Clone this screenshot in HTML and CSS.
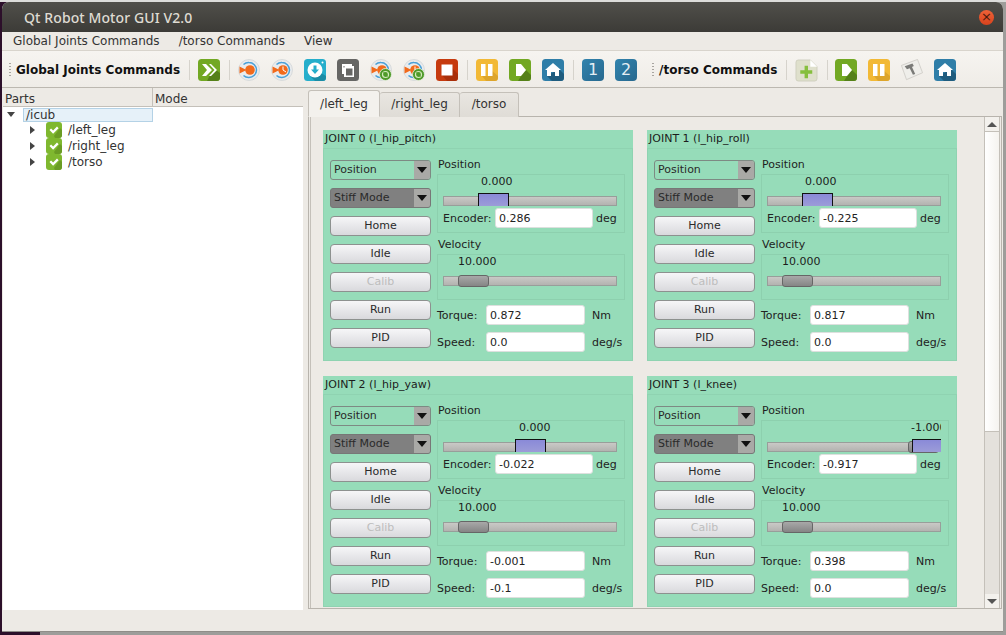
FILE: index.html
```html
<!DOCTYPE html>
<html lang="en">
<head>
  <meta charset="UTF-8" />
  <title>Qt Robot Motor GUI V2.0</title>
  <link rel="stylesheet" href="styles.css">
</head>
<body>
  <svg class="defs" xmlns="http://www.w3.org/2000/svg">
    <symbol id="i-ff" viewBox="0 0 22 22">
      <rect width="22" height="22" rx="3.5" fill="#72a823"/>
      <path d="M12 16l6-5 4 3v4.500a3.500 3.500 0 0 1-3.500 3.500H9z" fill="#558019"/>
      <path d="M4 5h4l6 6-6 6H4l5-6zM11 5h2l6 6-6 6h-2l5.500-6z" fill="#fff"/>
    </symbol>
    <symbol id="i-play" viewBox="0 0 22 22">
      <rect width="22" height="22" rx="3.500" fill="#72a823"/>
      <path d="M12 17l5-6 5 5v2.500a3.500 3.500 0 0 1-3.500 3.500H9z" fill="#558019"/>
      <path d="M7 5h5l5 6-5 6H7z" fill="#fff"/>
    </symbol>
    <symbol id="i-pause" viewBox="0 0 22 22">
      <rect width="22" height="22" rx="3.500" fill="#f2b936"/>
      <path d="M15 17v-6l7 6v1.500a3.500 3.500 0 0 1-3.500 3.500H10l-4-5z" fill="#dda52c"/>
      <path d="M5 5h4.500v12H5zM12 5h4.500v12H12z" fill="#fff"/>
    </symbol>
    <symbol id="i-home" viewBox="0 0 22 22">
      <rect width="22" height="22" rx="3.500" fill="#2f7ea8"/>
      <path d="M17 10l5 5v3.500a3.500 3.500 0 0 1-3.500 3.500H10l-5-5z" fill="#1f5c7e"/>
      <path d="M11 4l8 7h-2v6h-4v-4H9v4H5v-6H3z" fill="#fff"/>
    </symbol>
    <symbol id="i-stop" viewBox="0 0 22 22">
      <rect width="22" height="22" rx="3.500" fill="#c63a0e"/>
      <path d="M16 16V9l6 6v3.500a3.500 3.500 0 0 1-3.500 3.500H11l-5-6z" fill="#a92f0a"/>
      <rect x="5.500" y="5.500" width="11" height="11" fill="#fff"/>
    </symbol>
    <symbol id="i-down" viewBox="0 0 22 22">
      <rect width="22" height="22" rx="3.500" fill="#26aecb"/>
      <path d="M17 14l5 3v1.500a3.500 3.500 0 0 1-3.500 3.500H11l-4-4z" fill="#1b8ca5"/>
      <circle cx="11" cy="11" r="7.500" fill="#fff"/>
      <circle cx="18.500" cy="3.500" r="1" fill="#fff"/>
      <path d="M9.500 6.500h3v4H15l-4 4.500-4-4.500h2.500z" fill="#26aecb"/>
    </symbol>
    <symbol id="i-copy" viewBox="0 0 22 22">
      <rect width="22" height="22" rx="3.500" fill="#666664"/>
      <path d="M5 5h10v2h2v11H7v-3H5z" fill="#fff"/>
      <path d="M6.500 8.500h1V7h-1zM9 9.500h6.500v7H9z" fill="#666664"/>
    </symbol>
    <symbol id="i-target" viewBox="0 0 22 22">
      <circle cx="11" cy="11" r="10.500" fill="#e9ebed" stroke="#d2d5d7" stroke-width=".8"/>
      <path d="M11 3.500a7.500 7.500 0 0 1 0 15M5.500 5.500A7.500 7.500 0 0 1 11 3.500M5.500 16.500A7.500 7.500 0 0 0 11 18.500" fill="none" stroke="#4aa0d8" stroke-width="1.500"/>
      <circle cx="12" cy="11" r="4.800" fill="#f26a1b"/>
      <path d="M1.500 7.500l7 3.500-7 3.500z" fill="#f26a1b"/>
    </symbol>
    <symbol id="i-clock" viewBox="0 0 22 22">
      <circle cx="11" cy="11" r="10.500" fill="#e9ebed" stroke="#d2d5d7" stroke-width=".8"/>
      <path d="M11 3.500a7.500 7.500 0 0 1 0 15M5.500 5.500A7.500 7.500 0 0 1 11 3.500M5.500 16.500A7.500 7.500 0 0 0 11 18.500" fill="none" stroke="#4aa0d8" stroke-width="1.500"/>
      <circle cx="12" cy="11" r="4.800" fill="#f26a1b"/>
      <path d="M1.500 7.500l7 3.500-7 3.500z" fill="#f26a1b"/>
      <path d="M12 7.500V11l3 2" fill="none" stroke="#fff" stroke-width="1"/>
    </symbol>
    <symbol id="i-badge" viewBox="0 0 22 22">
      <circle cx="15.500" cy="15.500" r="6" fill="#4f9a2a" stroke="#eef1e6" stroke-width=".8"/>
      <circle cx="15.500" cy="15.500" r="3" fill="none" stroke="#d5eabc" stroke-width="1.200"/>
      <path d="M13.500 13.500l4 4" stroke="#4f9a2a" stroke-width="1.200"/>
    </symbol>
    <symbol id="i-plus" viewBox="0 0 24 24">
      <path d="M3.500 1H16l7 7v12.500a2.500 2.500 0 0 1-2.500 2.500h-17A2.500 2.500 0 0 1 1 20.500v-17A2.500 2.500 0 0 1 3.500 1z" fill="#dfe0cc" stroke="#c9c9b8" stroke-width=".8"/>
      <path d="M16 1l7 7h-7z" fill="#fff"/>
      <path d="M10 7h3.600v4.800H18v3.600h-4.400V20H10v-4.600H5.500v-3.600H10z" fill="#86bf3e"/>
    </symbol>
    <symbol id="i-hammer" viewBox="0 0 24 24">
      <path d="M0.500 7L18 0.500 23.500 15 6 22.500z" fill="#efeeea" stroke="#c8c6c0" stroke-width=".8"/>
      <path d="M4 8l8.500-3.200 1.500 2.700-2 1.300 3.500 7.500-2.500 1-3.500-7.300-3 1.200z" fill="#7b7b78"/>
    </symbol>
    <symbol id="i-check" viewBox="0 0 16 16">
      <rect width="16" height="16" rx="3" fill="#7fb82f"/>
      <path d="M8 14l6-8 2 2v5a3 3 0 0 1-3 3H9z" fill="#6a9c24"/>
      <path d="M3.500 8l1.600-1.600 2 2L11 4.600l1.600 1.600-5.500 5.600z" fill="#fff"/>
    </symbol>
  </svg>

  <div class="window">
    <div class="titlebar">
      <span class="title">Qt Robot Motor GUI V2.0</span>
      <span class="close">×</span>
    </div>

    <div class="menubar">
      <span>Global Joints Commands</span>
      <span>/torso Commands</span>
      <span>View</span>
    </div>

    <div class="toolbar">
      <span class="grip"></span>
      <span class="tool-label">Global Joints Commands</span>
      <span class="sep"></span>
      <svg class="tool"><use href="#i-ff"/></svg>
      <span class="sep"></span>
      <div class="tools">
        <svg class="tool"><use href="#i-target"/></svg>
        <svg class="tool"><use href="#i-clock"/></svg>
        <svg class="tool"><use href="#i-down"/></svg>
        <svg class="tool"><use href="#i-copy"/></svg>
        <svg class="tool"><use href="#i-target"/><use href="#i-badge"/></svg>
        <svg class="tool"><use href="#i-clock"/><use href="#i-badge"/></svg>
        <svg class="tool"><use href="#i-stop"/></svg>
      </div>
      <span class="sep"></span>
      <div class="tools">
        <svg class="tool"><use href="#i-pause"/></svg>
        <svg class="tool"><use href="#i-play"/></svg>
        <svg class="tool"><use href="#i-home"/></svg>
      </div>
      <span class="sep"></span>
      <div class="tools">
        <span class="tool tool-num">1</span>
        <span class="tool tool-num">2</span>
      </div>
      <span class="grip grip-torso"></span>
      <span class="tool-label">/torso Commands</span>
      <span class="sep"></span>
      <svg class="tool tool-big"><use href="#i-plus"/></svg>
      <span class="sep sep-tight"></span>
      <div class="tools">
        <svg class="tool"><use href="#i-play"/></svg>
        <svg class="tool"><use href="#i-pause"/></svg>
        <svg class="tool"><use href="#i-hammer"/></svg>
        <svg class="tool"><use href="#i-home"/></svg>
      </div>
    </div>

    <div class="main">
      <div class="tree">
        <div class="tree-head">
          <span class="head-cell">Parts</span>
          <span class="head-cell">Mode</span>
        </div>
        <div class="tree-row tree-root">
          <span class="arrow-down"></span>
          <span class="tree-selected">/icub</span>
        </div>
        <div class="tree-row">
          <span class="arrow-right"></span>
          <svg class="check"><use href="#i-check"/></svg>
          <span>/left_leg</span>
        </div>
        <div class="tree-row">
          <span class="arrow-right"></span>
          <svg class="check"><use href="#i-check"/></svg>
          <span>/right_leg</span>
        </div>
        <div class="tree-row">
          <span class="arrow-right"></span>
          <svg class="check"><use href="#i-check"/></svg>
          <span>/torso</span>
        </div>
      </div>

      <div class="splitter"></div>

      <div class="tabs">
        <div class="tab-bar">
          <span class="tab tab-active">/left_leg</span>
          <span class="tab tab-right">/right_leg</span>
          <span class="tab tab-torso">/torso</span>
        </div>
        <div class="pane">
          <div class="scroll-area">
            <div class="joints">

              <div class="joint">
                <div class="joint-title">JOINT 0 (l_hip_pitch)</div>
                <div class="joint-body">
                  <div class="joint-left">
                    <div class="combo">Position<span class="combo-arrow"></span></div>
                    <div class="combo combo-dark">Stiff Mode<span class="combo-arrow"></span></div>
                    <div class="btn">Home</div>
                    <div class="btn">Idle</div>
                    <div class="btn btn-off">Calib</div>
                    <div class="btn">Run</div>
                    <div class="btn">PID</div>
                  </div>
                  <div class="joint-right">
                    <div class="group-label">Position</div>
                    <div class="group group-pos">
                      <div class="value"><span style="margin-left:38px">0.000</span></div>
                      <div class="slider"><span class="handle-pos" style="left:34px"></span></div>
                      <div class="enc-row"><span class="enc-label">Encoder:</span><span class="field field-enc">0.286</span><span>deg</span></div>
                    </div>
                    <div class="group-label group-label-vel">Velocity</div>
                    <div class="group group-vel">
                      <div class="value"><span style="margin-left:15px">10.000</span></div>
                      <div class="slider"><span class="handle-vel"></span></div>
                    </div>
                    <div class="read-row read-torque"><span class="read-label">Torque:</span><span class="field">0.872</span><span class="read-unit">Nm</span></div>
                    <div class="read-row read-speed"><span class="read-label">Speed:</span><span class="field">0.0</span><span class="read-unit">deg/s</span></div>
                  </div>
                </div>
              </div>

              <div class="joint">
                <div class="joint-title">JOINT 1 (l_hip_roll)</div>
                <div class="joint-body">
                  <div class="joint-left">
                    <div class="combo">Position<span class="combo-arrow"></span></div>
                    <div class="combo combo-dark">Stiff Mode<span class="combo-arrow"></span></div>
                    <div class="btn">Home</div>
                    <div class="btn">Idle</div>
                    <div class="btn btn-off">Calib</div>
                    <div class="btn">Run</div>
                    <div class="btn">PID</div>
                  </div>
                  <div class="joint-right">
                    <div class="group-label">Position</div>
                    <div class="group group-pos">
                      <div class="value"><span style="margin-left:38px">0.000</span></div>
                      <div class="slider"><span class="handle-pos" style="left:34px"></span></div>
                      <div class="enc-row"><span class="enc-label">Encoder:</span><span class="field field-enc">-0.225</span><span>deg</span></div>
                    </div>
                    <div class="group-label group-label-vel">Velocity</div>
                    <div class="group group-vel">
                      <div class="value"><span style="margin-left:15px">10.000</span></div>
                      <div class="slider"><span class="handle-vel"></span></div>
                    </div>
                    <div class="read-row read-torque"><span class="read-label">Torque:</span><span class="field">0.817</span><span class="read-unit">Nm</span></div>
                    <div class="read-row read-speed"><span class="read-label">Speed:</span><span class="field">0.0</span><span class="read-unit">deg/s</span></div>
                  </div>
                </div>
              </div>

              <div class="joint">
                <div class="joint-title">JOINT 2 (l_hip_yaw)</div>
                <div class="joint-body">
                  <div class="joint-left">
                    <div class="combo">Position<span class="combo-arrow"></span></div>
                    <div class="combo combo-dark">Stiff Mode<span class="combo-arrow"></span></div>
                    <div class="btn">Home</div>
                    <div class="btn">Idle</div>
                    <div class="btn btn-off">Calib</div>
                    <div class="btn">Run</div>
                    <div class="btn">PID</div>
                  </div>
                  <div class="joint-right">
                    <div class="group-label">Position</div>
                    <div class="group group-pos">
                      <div class="value"><span style="margin-left:76px">0.000</span></div>
                      <div class="slider"><span class="handle-pos" style="left:71px"></span></div>
                      <div class="enc-row"><span class="enc-label">Encoder:</span><span class="field field-enc">-0.022</span><span>deg</span></div>
                    </div>
                    <div class="group-label group-label-vel">Velocity</div>
                    <div class="group group-vel">
                      <div class="value"><span style="margin-left:15px">10.000</span></div>
                      <div class="slider"><span class="handle-vel"></span></div>
                    </div>
                    <div class="read-row read-torque"><span class="read-label">Torque:</span><span class="field">-0.001</span><span class="read-unit">Nm</span></div>
                    <div class="read-row read-speed"><span class="read-label">Speed:</span><span class="field">-0.1</span><span class="read-unit">deg/s</span></div>
                  </div>
                </div>
              </div>

              <div class="joint">
                <div class="joint-title">JOINT 3 (l_knee)</div>
                <div class="joint-body">
                  <div class="joint-left">
                    <div class="combo">Position<span class="combo-arrow"></span></div>
                    <div class="combo combo-dark">Stiff Mode<span class="combo-arrow"></span></div>
                    <div class="btn">Home</div>
                    <div class="btn">Idle</div>
                    <div class="btn btn-off">Calib</div>
                    <div class="btn">Run</div>
                    <div class="btn">PID</div>
                  </div>
                  <div class="joint-right">
                    <div class="group-label">Position</div>
                    <div class="group group-pos">
                      <div class="value"><span style="margin-left:144px">-1.000</span></div>
                      <div class="slider">
                        <span class="handle-vel" style="left:140px"></span>
                        <span class="handle-pos handle-end" style="left:144px"></span>
                      </div>
                      <div class="enc-row"><span class="enc-label">Encoder:</span><span class="field field-enc">-0.917</span><span>deg</span></div>
                    </div>
                    <div class="group-label group-label-vel">Velocity</div>
                    <div class="group group-vel">
                      <div class="value"><span style="margin-left:15px">10.000</span></div>
                      <div class="slider"><span class="handle-vel"></span></div>
                    </div>
                    <div class="read-row read-torque"><span class="read-label">Torque:</span><span class="field">0.398</span><span class="read-unit">Nm</span></div>
                    <div class="read-row read-speed"><span class="read-label">Speed:</span><span class="field">0.0</span><span class="read-unit">deg/s</span></div>
                  </div>
                </div>
              </div>

            </div>
            <div class="scrollbar">
              <span class="scroll-btn"><span class="tri-up"></span></span>
              <span class="scroll-thumb"></span>
              <span class="scroll-groove"></span>
              <span class="scroll-btn"><span class="tri-down"></span></span>
            </div>
          </div>
        </div>
      </div>
    </div>

    <div class="statusbar"></div>
  </div>
</body>
</html>
```
FILE: styles.css
```css
* {
  box-sizing: border-box;
}
html, body {
  height: 100%;
}
body {
  margin: 0;
  padding: 2px 3px 3px 2px;
  overflow: hidden;
  font-family: 'DejaVu Sans', sans-serif;
  font-size: 11px;
  color: #222;
  background:
    linear-gradient(#dcdcda 0 2px, transparent 2px),
    linear-gradient(90deg, #2c0f2a 0 40px, #9d9d9a 40px);
}
.defs {
  display: none;
}
.window {
  height: 630px;
  display: flex;
  flex-direction: column;
  overflow: hidden;
  border-radius: 7px 7px 0 0;
  background-color: #edeae5;
  border-bottom: 1px solid #8f8d88;
}

/* title bar */
.titlebar {
  flex: none;
  height: 30px;
  display: flex;
  align-items: center;
  padding: 0 9px 0 22px;
  justify-content: space-between;
  background: linear-gradient(#504f4a, #3c3b37);
}
.title {
  font-family: 'Noto Sans', sans-serif;
  font-size: 14px;
  font-weight: 500;
  letter-spacing: 0.1px;
  color: #dfdbd2;
}
.close {
  width: 15px;
  height: 15px;
  border-radius: 50%;
  background: linear-gradient(#ee6238, #d9431d);
  color: #4a1a0c;
  font-size: 13px;
  line-height: 14px;
  text-align: center;
}

/* menu */
.menubar {
  flex: none;
  height: 18px;
  display: flex;
  align-items: center;
  gap: 19px;
  padding-left: 11px;
  font-size: 12px;
  color: #333;
}

/* toolbar */
.toolbar {
  flex: none;
  height: 38px;
  display: flex;
  align-items: center;
  padding: 2px 0 0 7px;
  background: linear-gradient(#f6f4f0, #efece7);
  border-top: 1px solid #d8d4cc;
  border-bottom: 1px solid #bcb8b0;
}
.grip {
  width: 2px;
  height: 16px;
  background-image: radial-gradient(#a8a5a0 45%, transparent 50%);
  background-size: 2px 3px;
}
.grip-torso {
  margin-left: 15px;
}
.tool-label {
  margin-left: 5px;
  font-weight: bold;
  font-size: 12px;
  color: #111;
  white-space: nowrap;
}
.sep {
  width: 1px;
  height: 20px;
  margin: 0 8px 0 9px;
  background-color: #d6d3cc;
}
.sep-tight {
  margin-right: 7px;
}
.tools {
  display: flex;
  gap: 11px;
}
.tool {
  display: block;
  flex: none;
  width: 22px;
  height: 22px;
}
.tool-big {
  width: 23px;
  height: 23px;
}
.tool-num {
  border-radius: 4px;
  background: linear-gradient(135deg, #3284ae, #27688e);
  color: #e4eef4;
  font-size: 16px;
  line-height: 22px;
  text-align: center;
}

/* main area */
.main {
  flex: 1;
  min-height: 0;
  display: flex;
}
.tree {
  flex: none;
  width: 300px;
  margin-left: 1px;
  background-color: #fff;
  color: #333;
}
.tree-head {
  display: flex;
  height: 19px;
  background-color: #edeae5;
  border-bottom: 1px solid #c4c0b9;
  font-size: 12px;
}
.head-cell {
  width: 150px;
  padding: 4px 0 0 2px;
  border-right: 1px solid #c4c0b9;
  color: #333;
}
.head-cell:last-child {
  border-right: none;
}
.tree-row {
  height: 16px;
  display: flex;
  align-items: center;
  padding-left: 27px;
  font-size: 12px;
}
.tree-root {
  height: 15px;
  padding-left: 4px;
}
.tree-selected {
  width: 130px;
  height: 14px;
  line-height: 12px;
  margin-left: 8px;
  padding-left: 2px;
  background-color: #e6f1f9;
  border: 1px solid #b4d2e6;
}
.arrow-down {
  width: 0;
  height: 0;
  border-style: solid;
  border-width: 5px 4.500px 0;
  border-color: #444 transparent transparent;
}
.arrow-right {
  width: 0;
  height: 0;
  border-style: solid;
  border-width: 4.500px 0 4.500px 5px;
  border-color: transparent transparent transparent #444;
}
.check {
  width: 16px;
  height: 16px;
  margin: 0 6px 0 11px;
}
.splitter {
  flex: none;
  width: 5px;
  background-color: #edeae5;
}

/* tabs */
.tabs {
  flex: 1;
  min-width: 0;
  display: flex;
  flex-direction: column;
  padding-bottom: 1px;
}
.tab-bar {
  flex: none;
  display: flex;
  height: 29px;
  align-items: flex-end;
  position: relative;
  z-index: 1;
  margin-bottom: -1px;
}
.tab {
  height: 25px;
  border: 1px solid #c4c0b9;
  border-bottom: none;
  border-radius: 3px 3px 0 0;
  padding-top: 4px;
  text-align: center;
  font-size: 12px;
  color: #333;
  background: linear-gradient(#e9e6e1, #dfdcd6);
}
.tab-active {
  width: 72px;
  height: 27px;
  padding-top: 6px;
  background: #f3f1ed;
  border-bottom: 1px solid #f3f1ed;
}
.tab-right {
  width: 80px;
  border-left: none;
}
.tab-torso {
  width: 59px;
  border-left: none;
}
.pane {
  flex: 1;
  min-height: 0;
  margin-right: 1px;
  padding: 0 1px;
  border: 1px solid #b8b4ad;
}
.scroll-area {
  height: 100%;
  display: flex;
  border-left: 1px solid #c4c0b9;
  border-right: 1px solid #c4c0b9;
  background-color: #edeae5;
  overflow: hidden;
}
.joints {
  flex: 1;
  min-width: 0;
  height: 100%;
  overflow: hidden;
  padding: 13px 0 0 12px;
  display: grid;
  grid-template-columns: 310px 310px;
  grid-auto-rows: 231px;
  column-gap: 14px;
  row-gap: 15px;
}

/* joint card */
.joint {
  background-color: #96dcb9;
}
.joint-title {
  height: 18px;
  padding: 2px 0 0 2px;
  color: #1c1c1c;
  white-space: nowrap;
}
.joint-body {
  height: 213px;
  display: flex;
  gap: 6px;
  padding: 11px 0 0 6px;
  border: 1px solid #8fd3b1;
}
.joint-left {
  flex: none;
  width: 101px;
  display: flex;
  flex-direction: column;
  gap: 8px;
}
.combo {
  height: 20px;
  position: relative;
  padding-left: 3px;
  line-height: 18px;
  border: 1px solid #7d8a83;
  border-radius: 3px;
  color: #2a2a2a;
  overflow: hidden;
}
.combo-dark {
  background-color: #808080;
  border-color: #777;
}
.combo-arrow {
  position: absolute;
  top: 0;
  right: 0;
  width: 16px;
  height: 18px;
  background-color: #a9a9a6;
}
.combo-arrow::after {
  content: "";
  position: absolute;
  left: 3px;
  top: 6px;
  border-style: solid;
  border-width: 6px 5px 0;
  border-color: #111 transparent transparent;
}
.btn {
  height: 20px;
  line-height: 18px;
  text-align: center;
  border: 1px solid #8d918f;
  border-radius: 4px;
  background: linear-gradient(#f6f6f8, #d9d9dd);
  color: #2a2a2a;
}
.btn-off {
  color: #bdbdbd;
}
.joint-right {
  flex: none;
  width: 188px;
  margin-top: -2px;
}
.group-label {
  height: 16px;
  padding-left: 1px;
  line-height: 13px;
  color: #1e1e1e;
}
.group-label-vel {
  height: 21px;
  padding-top: 5px;
}
.group {
  padding: 0 7px 0 5px;
  border: 1px solid #8dd0ae;
}
.group-pos {
  height: 59px;
}
.group-vel {
  height: 46px;
}
.value {
  height: 14px;
  line-height: 14px;
  overflow: hidden;
  white-space: nowrap;
  color: #1c1c1c;
}
.slider {
  position: relative;
  height: 10px;
  margin-top: 7px;
  border: 1px solid #989e9a;
  background: linear-gradient(#c9c9c6, #b3b3b0);
}
.handle-pos {
  position: absolute;
  top: -4px;
  width: 31px;
  height: 13px;
  background: linear-gradient(#8a8ad8, #9c9cd8);
  border: 1px solid #111;
  border-bottom: none;
}
.handle-end {
  width: 29px;
  border-right: none;
}
.handle-vel {
  position: absolute;
  top: -2px;
  left: 14px;
  width: 31px;
  height: 12px;
  border: 1px solid #666;
  border-radius: 3px;
  background: linear-gradient(#a8a8a8, #858585);
}
.enc-row {
  display: flex;
  align-items: center;
  margin-top: 2px;
  height: 20px;
  color: #222;
}
.enc-label {
  width: 52px;
}
.field {
  display: block;
  height: 20px;
  line-height: 19px;
  padding-left: 3px;
  background-color: #fff;
  border: 1px solid #dde0de;
  border-radius: 3px;
  color: #222;
}
.field-enc {
  width: 98px;
  margin-right: 3px;
}
.read-row {
  display: flex;
  align-items: center;
  height: 20px;
  color: #222;
}
.read-row .field {
  width: 99px;
}
.read-torque {
  margin-top: 5px;
}
.read-speed {
  margin-top: 7px;
}
.read-label {
  width: 49px;
}
.read-unit {
  margin-left: 7px;
}

/* scrollbar */
.scrollbar {
  flex: none;
  width: 15px;
  display: flex;
  flex-direction: column;
  border-left: 1px solid #c4c0b9;
}
.scroll-btn {
  flex: none;
  height: 14px;
  display: flex;
  align-items: center;
  justify-content: center;
  background-color: #f3f1ed;
}
.scroll-thumb {
  flex: none;
  height: 301px;
  background: linear-gradient(90deg, #fff, #f5f3ef);
  border-top: 1px solid #c4c0b9;
  border-bottom: 1px solid #c4c0b9;
}
.scroll-groove {
  flex: 1;
  background-color: #e4e1dc;
}
.tri-up, .tri-down {
  width: 0;
  height: 0;
  border-style: solid;
}
.tri-up {
  border-width: 0 5px 5px;
  border-color: transparent transparent #555;
}
.tri-down {
  border-width: 5px 5px 0;
  border-color: #555 transparent transparent;
}

.statusbar {
  flex: none;
  height: 21px;
  background-color: #edeae5;
}
```
